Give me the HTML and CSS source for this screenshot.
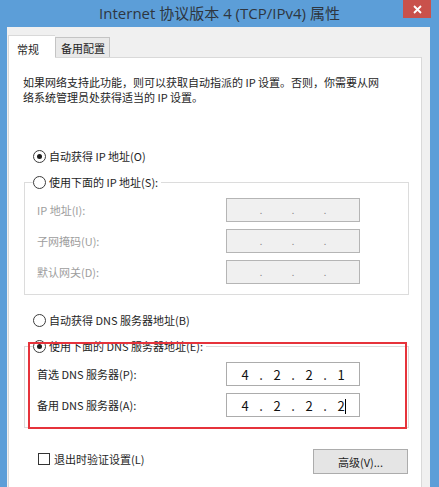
FILE: index.html
```html
<!DOCTYPE html>
<html lang="zh-CN">
<head>
    <meta charset="UTF-8">
    <meta name="viewport" content="width=device-width, initial-scale=1.0">
    <title>Internet 协议版本 4 (TCP/IPv4) 属性</title>
    <link rel="stylesheet" href="styles.css">
</head>
<body>
    <div class="window">
        <div class="titlebar">
            <span></span>
            <div class="title">Internet 协议版本 4 (TCP/IPv4) 属性</div>
            <div class="close">
                <svg width="9" height="9" viewBox="0 0 9 9"><path d="M1 1L8 8M8 1L1 8" stroke="#fff" stroke-width="1.8" fill="none"/></svg>
            </div>
        </div>

        <div class="client">
            <div class="tabs">
                <div class="tab active">常规</div>
                <div class="tab">备用配置</div>
            </div>

            <div class="panel">
                <p class="desc">如果网络支持此功能，则可以获取自动指派的 IP 设置。否则，你需要从网<br>络系统管理员处获得适当的 IP 设置。</p>

                <div class="option first">
                    <span class="radio checked"></span>
                    <span>自动获得 IP 地址(O)</span>
                </div>

                <div class="group">
                    <div class="option head">
                        <span class="radio"></span>
                        <span>使用下面的 IP 地址(S):</span>
                    </div>
                    <div class="field disabled">
                        <label>IP 地址(I):</label>
                        <div class="ip"><span></span><i>.</i><span></span><i>.</i><span></span><i>.</i><span></span></div>
                    </div>
                    <div class="field disabled">
                        <label>子网掩码(U):</label>
                        <div class="ip"><span></span><i>.</i><span></span><i>.</i><span></span><i>.</i><span></span></div>
                    </div>
                    <div class="field disabled">
                        <label>默认网关(D):</label>
                        <div class="ip"><span></span><i>.</i><span></span><i>.</i><span></span><i>.</i><span></span></div>
                    </div>
                </div>

                <div class="option">
                    <span class="radio"></span>
                    <span>自动获得 DNS 服务器地址(B)</span>
                </div>

                <div class="group dns">
                    <div class="option head">
                        <span class="radio checked"></span>
                        <span>使用下面的 DNS 服务器地址(E):</span>
                    </div>
                    <div class="field">
                        <label>首选 DNS 服务器(P):</label>
                        <div class="ip"><span>4</span><i>.</i><span>2</span><i>.</i><span>2</span><i>.</i><span>1</span></div>
                    </div>
                    <div class="field">
                        <label>备用 DNS 服务器(A):</label>
                        <div class="ip"><span>4</span><i>.</i><span>2</span><i>.</i><span>2</span><i>.</i><span>2<b class="caret"></b></span></div>
                    </div>
                    <!-- annotation drawn over the dialog -->
                    <div class="mark"></div>
                </div>

                <div class="footer">
                    <div class="check">
                        <span class="box"></span>
                        <span>退出时验证设置(L)</span>
                    </div>
                    <button class="btn">高级(V)...</button>
                </div>
            </div>
        </div>
    </div>
</body>
</html>
```

FILE: styles.css
```css
html, body {
    margin: 0;
    padding: 0;
    overflow: hidden;
}

body {
    font-family: "Noto Sans CJK SC", sans-serif;
    font-size: 11px;
    color: #1e1e1e;
}

.window {
    width: 439px;
    height: 487px;
    background: #5c9ed8;
    display: flex;
    flex-direction: column;
    overflow: hidden;
}

.titlebar {
    height: 27px;
    flex: none;
    display: grid;
    grid-template-columns: 1fr auto 1fr;
}

.title {
    font-family: "Open Sans", "Noto Sans CJK SC", sans-serif;
    font-size: 15px;
    line-height: 27px;
    color: #2e3640;
    white-space: nowrap;
}

.close {
    justify-self: end;
    width: 28px;
    height: 18px;
    margin-right: 8px;
    background: #c9514b;
    display: flex;
    align-items: center;
    justify-content: center;
}

.client {
    flex: 1;
    margin: 0 9px 0 7px;
    background: #f0f0f0;
    display: flex;
    flex-direction: column;
    padding-left: 1px;
    padding-right: 8px;
}

.tabs {
    display: flex;
    align-items: flex-end;
    margin-top: 8px;
    height: 22px;
}

.tab {
    height: 19px;
    padding: 0 4px 0 5px;
    line-height: 21px;
    border: 1px solid #c4c4c4;
    border-bottom: none;
    background: #e9e9e9;
}

.tab.active {
    height: 22px;
    width: 38px;
    line-height: 26px;
    padding: 0 0 0 8px;
    background: #fff;
    border-color: #d9d9d9;
    margin-bottom: -1px;
    position: relative;
    z-index: 1;
    border-right: none;
}

.panel {
    flex: 1;
    background: #fff;
    border: 1px solid #d9d9d9;
    border-bottom: none;
}

.desc {
    margin: 0;
    padding: 17px 0 0 14px;
    line-height: 15px;
}

.option {
    height: 20px;
    display: flex;
    align-items: center;
    gap: 2px;
    padding-left: 24px;
}

.option.first {
    margin-top: 41px;
}

.radio {
    width: 11px;
    height: 11px;
    border: 1px solid #3c3c3c;
    border-radius: 50%;
    background: #fff;
    display: flex;
    align-items: center;
    justify-content: center;
    margin-right: 1px;
}

.radio.checked::after {
    content: "";
    width: 5px;
    height: 5px;
    border-radius: 50%;
    background: #1e1e1e;
}

.group {
    margin: 16px 12px 0 15px;
    border: 1px solid #dcdcdc;
    padding-bottom: 10px;
    position: relative;
}

.option.head {
    width: fit-content;
    margin: -11px 0 0 8px;
    padding: 0 3px 0 0;
    background: #fff;
}

.group + .option {
    margin-top: 15px;
}

.field {
    height: 24px;
    display: flex;
    align-items: center;
    padding-left: 12px;
    margin-top: 7px;
}

.option.head + .field {
    margin-top: 6px;
}

.field label {
    width: 189px;
}

.field.disabled label {
    color: #9d9d9d;
}

.ip {
    box-sizing: border-box;
    width: 134px;
    height: 24px;
    border: 1px solid #acacac;
    background: #fff;
    display: flex;
    align-items: center;
    padding-left: 5px;
    font-size: 13px;
    color: #111;
}

.ip span {
    width: 26px;
    text-align: center;
}

.ip i {
    width: 6px;
    font-style: normal;
    text-align: center;
}

.field.disabled .ip {
    background: #f0f0f0;
    border-color: #b5b5b5;
    color: #8a8a8a;
    font-size: 9px;
}

.caret {
    display: inline-block;
    width: 1px;
    height: 15px;
    background: #000;
    vertical-align: -3px;
    margin-right: -1px;
}

.mark {
    position: absolute;
    left: 3px;
    right: 1px;
    top: -5px;
    bottom: -2px;
    border: 2px solid #e6333b;
    z-index: 2;
}

.footer {
    display: flex;
    justify-content: space-between;
    align-items: flex-start;
    margin-top: 21px;
    padding-left: 29px;
    padding-right: 13px;
}

.check {
    height: 19px;
    display: flex;
    align-items: center;
    gap: 4px;
}

.box {
    width: 10px;
    height: 10px;
    border: 1px solid #333;
    background: #fff;
}

.btn {
    width: 95px;
    height: 25px;
    font-family: "Noto Sans CJK SC", sans-serif;
    font-size: 11px;
    color: #1e1e1e;
    background: #e5e5e5;
    border: 1px solid #acacac;
    border-radius: 0;
    padding: 0;
}
```
